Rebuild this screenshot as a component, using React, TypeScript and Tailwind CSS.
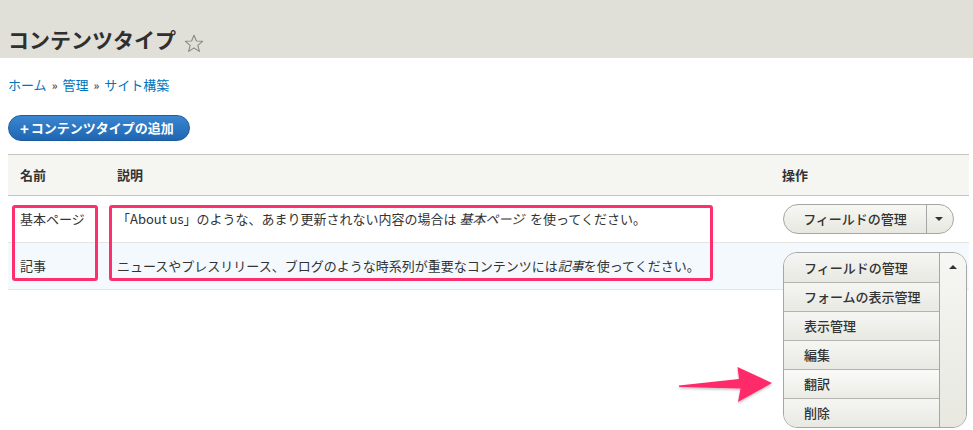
import React from "react";

const FONT = "font-['Noto_Sans_CJK_JP','Noto_Sans',sans-serif]";

const MENU = ["フィールドの管理", "フォームの表示管理", "表示管理", "編集", "翻訳", "削除"];

function Star() {
  return (
    <svg width="20" height="19" viewBox="0 0 20 19" className="ml-2 mb-[2px]">
      <polygon
        points="10,1.2 12.4,7 18.6,7.3 13.8,11.3 15.4,17.4 10,14 4.6,17.4 6.2,11.3 1.4,7.3 7.6,7"
        fill="none"
        stroke="#8a8a86"
        strokeWidth="1.1"
        strokeLinejoin="round"
      />
    </svg>
  );
}

function ClosedDropbutton() {
  return (
    <div className="flex h-[30px] w-[171px] rounded-full border border-[#a6a6a6] bg-linear-to-b from-[#f7f7f4] to-[#e8e8e1] text-[13px] font-medium text-[#333]">
      <div className="flex flex-1 items-center justify-center">フィールドの管理</div>
      <div className="flex w-[27px] items-center justify-center border-l border-[#a6a6a6] pr-0.5">
        <span className="h-0 w-0 border-x-[4px] border-t-[4px] border-x-transparent border-t-[#333]" />
      </div>
    </div>
  );
}

function OpenDropbutton() {
  return (
    <div className="absolute left-[13px] top-[9px] z-10 flex w-[184px] overflow-hidden rounded-[14px] border border-[#a6a6a6] bg-linear-to-b from-[#f4f4f0] to-[#e6e6df] text-[13px] font-medium text-[#333]">
      <div className="flex flex-1 flex-col">
        {MENU.map((m, i) => (
          <div
            key={m}
            className={
              "flex h-[29px] items-center pl-5 " +
              (i > 0 ? "border-t border-[#b4b4ae] " : "") +
              (m === "翻訳"
                ? "bg-linear-to-b from-[#fafaf8] to-[#ecece6]"
                : "bg-linear-to-b from-[#f5f5f2] to-[#e9e9e3]")
            }
          >
            {m}
          </div>
        ))}
      </div>
      <div className="flex w-[27px] justify-center border-l border-[#a6a6a6] bg-linear-to-b from-[#f6f6f3] to-[#e8e8e1] pt-[12px]">
        <span className="h-0 w-0 border-x-[4px] border-b-[4px] border-x-transparent border-b-[#333]" />
      </div>
    </div>
  );
}

function Arrow() {
  return (
    <svg
      width="100"
      height="44"
      viewBox="0 0 100 44"
      className="absolute left-[676px] top-[362px]"
    >
      <defs>
        <filter id="sh" x="-10%" y="-20%" width="130%" height="150%">
          <feDropShadow dx="0" dy="1.5" stdDeviation="1.2" floodColor="#000" floodOpacity="0.25" />
        </filter>
      </defs>
      <path
        d="M3 23.5 L63 17 L61.5 5 L96 21 L62 40 L64.5 26.5 L3 25 Z"
        fill="#fe2a6a"
        filter="url(#sh)"
      />
    </svg>
  );
}

export default function App() {
  return (
    <div className={`${FONT} relative min-h-[430px] w-[973px] bg-white text-[13px] text-[#333]`}>
      <div className="flex h-[58px] items-end bg-[#e0dfd8] px-2 pb-[3px]">
        <h1 className="text-[21px] font-bold leading-[32px] text-[#2f2f2f]">コンテンツタイプ</h1>
        <Star />
      </div>

      <div className="px-2">
        <nav className="mt-[17px] flex items-center gap-[5px] text-[13px] leading-[20px] text-[#0074bd]">
          <span>ホーム</span>
          <span className="text-[11px] font-bold text-[#555]">»</span>
          <span>管理</span>
          <span className="text-[11px] font-bold text-[#555]">»</span>
          <span>サイト構築</span>
        </nav>

        <button className="mt-[20px] flex h-[26px] w-[182px] items-center rounded-full border border-[#1e5c9e] bg-linear-to-b from-[#3a86d0] to-[#1f66b2] pl-[11px] text-[13px] font-bold text-white">
          <span className="mr-[2px] text-[15px] leading-none">+</span>
          コンテンツタイプの追加
        </button>

        <div className="relative mt-[13px]">
          <table className="w-[961px] border-collapse text-left">
            <thead>
              <tr className="h-[41px] border-y border-[#c5c4be] bg-[#f5f5f2] text-[13px] font-bold">
                <th className="w-[97px] pl-3 font-bold">名前</th>
                <th className="w-[665px] pl-3 font-bold">説明</th>
                <th className="pl-3 font-bold">操作</th>
              </tr>
            </thead>
            <tbody>
              <tr className="h-[47px] border-b border-[#e6e5e1] bg-white">
                <td className="pl-3 align-middle">基本ページ</td>
                <td className="pl-3">
                  「About us」のような、あまり更新されない内容の場合は <em>基本ページ</em>&nbsp;&nbsp;を使ってください。
                </td>
                <td className="pl-[13px]">
                  <ClosedDropbutton />
                </td>
              </tr>
              <tr className="h-[47px] border-b border-[#e6e5e1] bg-[#f4f9fd]">
                <td className="pl-3">記事</td>
                <td className="pl-3">
                  ニュースやプレスリリース、ブログのような時系列が重要なコンテンツには<em>記事</em>を使ってください。
                </td>
                <td className="relative">
                  <OpenDropbutton />
                </td>
              </tr>
            </tbody>
          </table>

          <div className="pointer-events-none absolute left-[4px] top-[51px] h-[76px] w-[86px] rounded-[3px] border-[3px] border-[#fe2f6d]" />
          <div className="pointer-events-none absolute left-[101px] top-[51px] h-[76px] w-[604px] rounded-[3px] border-[3px] border-[#fe2f6d]" />
        </div>
      </div>

      <Arrow />
    </div>
  );
}
